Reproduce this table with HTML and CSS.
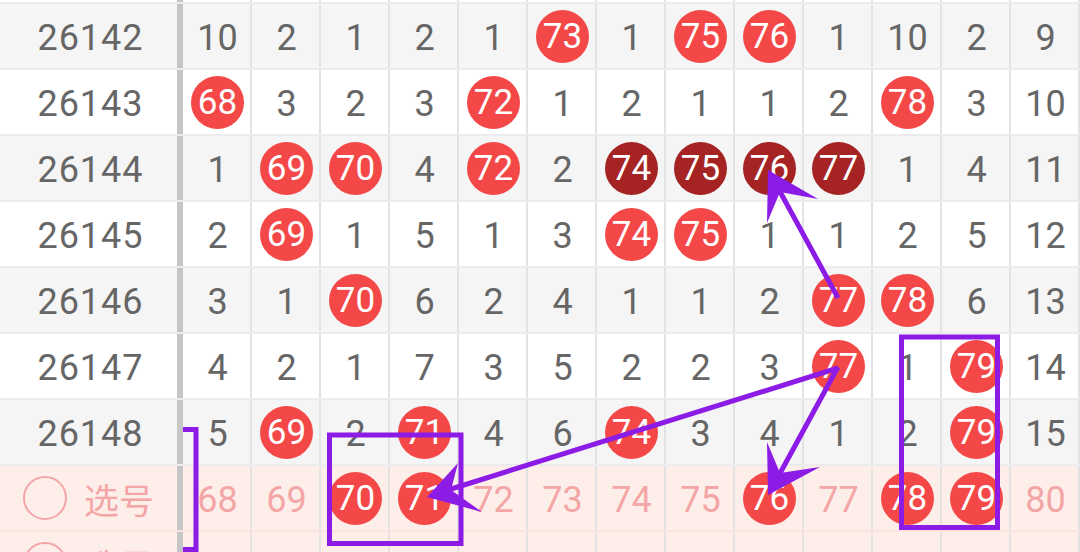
FILE: index.html
```html
<!DOCTYPE html>
<html lang="zh">

<head>
    <meta charset="UTF-8">
    <meta name="viewport" content="width=device-width, initial-scale=1.0">
    <title>走势图</title>
    <link rel="stylesheet" href="styles.css">
</head>

<body>
    <div class="chart">
        <div class="row odd">
            <div class="issue"></div>
            <div class="cell"></div><div class="cell"></div><div class="cell"></div><div class="cell"></div>
            <div class="cell"></div><div class="cell"></div><div class="cell"></div><div class="cell"></div>
            <div class="cell"></div><div class="cell"></div><div class="cell"></div><div class="cell"></div>
            <div class="cell"></div>
        </div>
        <div class="row even">
            <div class="issue">26142</div>
            <div class="cell">10</div><div class="cell">2</div><div class="cell">1</div><div class="cell">2</div>
            <div class="cell">1</div><div class="cell"><span class="ball">73</span></div><div class="cell">1</div>
            <div class="cell"><span class="ball">75</span></div><div class="cell"><span class="ball">76</span></div>
            <div class="cell">1</div><div class="cell">10</div><div class="cell">2</div><div class="cell">9</div>
        </div>
        <div class="row odd">
            <div class="issue">26143</div>
            <div class="cell"><span class="ball">68</span></div><div class="cell">3</div><div class="cell">2</div>
            <div class="cell">3</div><div class="cell"><span class="ball">72</span></div><div class="cell">1</div>
            <div class="cell">2</div><div class="cell">1</div><div class="cell">1</div><div class="cell">2</div>
            <div class="cell"><span class="ball">78</span></div><div class="cell">3</div><div class="cell">10</div>
        </div>
        <div class="row even">
            <div class="issue">26144</div>
            <div class="cell">1</div><div class="cell"><span class="ball">69</span></div>
            <div class="cell"><span class="ball">70</span></div><div class="cell">4</div>
            <div class="cell"><span class="ball">72</span></div><div class="cell">2</div>
            <div class="cell"><span class="ball dark">74</span></div><div class="cell"><span class="ball dark">75</span></div>
            <div class="cell"><span class="ball dark">76</span></div><div class="cell"><span class="ball dark">77</span></div>
            <div class="cell">1</div><div class="cell">4</div><div class="cell">11</div>
        </div>
        <div class="row odd">
            <div class="issue">26145</div>
            <div class="cell">2</div><div class="cell"><span class="ball">69</span></div><div class="cell">1</div>
            <div class="cell">5</div><div class="cell">1</div><div class="cell">3</div>
            <div class="cell"><span class="ball">74</span></div><div class="cell"><span class="ball">75</span></div>
            <div class="cell">1</div><div class="cell">1</div><div class="cell">2</div><div class="cell">5</div>
            <div class="cell">12</div>
        </div>
        <div class="row even">
            <div class="issue">26146</div>
            <div class="cell">3</div><div class="cell">1</div><div class="cell"><span class="ball">70</span></div>
            <div class="cell">6</div><div class="cell">2</div><div class="cell">4</div><div class="cell">1</div>
            <div class="cell">1</div><div class="cell">2</div><div class="cell"><span class="ball">77</span></div>
            <div class="cell"><span class="ball">78</span></div><div class="cell">6</div><div class="cell">13</div>
        </div>
        <div class="row odd">
            <div class="issue">26147</div>
            <div class="cell">4</div><div class="cell">2</div><div class="cell">1</div><div class="cell">7</div>
            <div class="cell">3</div><div class="cell">5</div><div class="cell">2</div><div class="cell">2</div>
            <div class="cell">3</div><div class="cell"><span class="ball">77</span></div><div class="cell">1</div>
            <div class="cell"><span class="ball">79</span></div><div class="cell">14</div>
        </div>
        <div class="row even">
            <div class="issue">26148</div>
            <div class="cell">5</div><div class="cell"><span class="ball">69</span></div><div class="cell">2</div>
            <div class="cell"><span class="ball">71</span></div><div class="cell">4</div><div class="cell">6</div>
            <div class="cell"><span class="ball">74</span></div><div class="cell">3</div><div class="cell">4</div>
            <div class="cell">1</div><div class="cell">2</div><div class="cell"><span class="ball">79</span></div>
            <div class="cell">15</div>
        </div>
        <div class="row pick">
            <div class="issue"><span class="radio"></span>选号</div>
            <div class="cell">68</div><div class="cell">69</div><div class="cell"><span class="ball">70</span></div>
            <div class="cell"><span class="ball">71</span></div><div class="cell">72</div><div class="cell">73</div>
            <div class="cell">74</div><div class="cell">75</div><div class="cell"><span class="ball">76</span></div>
            <div class="cell">77</div><div class="cell"><span class="ball">78</span></div>
            <div class="cell"><span class="ball">79</span></div><div class="cell">80</div>
        </div>
        <div class="row pick">
            <div class="issue"><span class="radio"></span>选号</div>
            <div class="cell">68</div><div class="cell">69</div><div class="cell">70</div><div class="cell">71</div>
            <div class="cell">72</div><div class="cell">73</div><div class="cell">74</div><div class="cell">75</div>
            <div class="cell">76</div><div class="cell">77</div><div class="cell">78</div><div class="cell">79</div>
            <div class="cell">80</div>
        </div>
    </div>

    <!-- hand drawn marks on top of the chart -->
    <svg class="marks" width="1080" height="552" viewBox="0 0 1080 552">
        <g fill="none" stroke="#8c1be6" stroke-width="5">
            <rect x="901.5" y="337" width="96" height="190.5" />
            <rect x="329.5" y="435" width="131.5" height="108.5" />
            <polyline points="183,429.5 196,429.5 196,549.5 183,549.5" />
            <line x1="838" y1="298" x2="778" y2="188" />
            <line x1="838" y1="368" x2="448" y2="490" />
            <line x1="838" y1="367" x2="778" y2="477" />
        </g>
        <g fill="#8c1be6">
            <polygon points="768,170 818,199 780,192 767,223" />
            <polygon points="427,497 458,463 451,490 482,512" />
            <polygon points="768,495 767,442 780,473 820,467" />
        </g>
    </svg>
</body>

</html>
```

FILE: styles.css
```css
* {
    box-sizing: border-box;
    padding: 0;
    margin: 0;
}

html,
body {
    width: 1080px;
    height: 552px;
    overflow: hidden;
    background: #fff;
}

body {
    position: relative;
    font-family: Roboto, "Noto Sans CJK SC", sans-serif;
    color: #666;
}

.chart {
    margin-top: -62px;
}

.row {
    display: grid;
    grid-template-columns: 183px repeat(13, 69px);
    height: 66px;
    border-bottom: 2px solid #ececec;
}

.row.even {
    background: #f5f5f5;
}

.row.odd {
    background: #fff;
}

.row.pick {
    background: #fdeee9;
    border-bottom-color: #fbe4de;
    color: #f4a6a6;
}

.issue {
    display: flex;
    justify-content: center;
    align-items: center;
    border-right: 6px solid #c6c6c6;
    font-size: 36px;
    letter-spacing: 1px;
    padding: 3px 0 0 4px;
}

.pick .issue {
    justify-content: flex-start;
    padding: 0 0 0 23px;
    font-family: "Noto Sans CJK SC", sans-serif;
    font-size: 35px;
    letter-spacing: 0;
}

.radio {
    width: 44px;
    height: 44px;
    border: 2.5px solid #f4a6a6;
    border-radius: 50%;
    margin-right: 17px;
}

.cell {
    display: flex;
    justify-content: center;
    align-items: center;
    border-right: 2px solid #e3e3e3;
    font-size: 36px;
    padding: 3px 0 0 2px;
}

.ball {
    display: flex;
    justify-content: center;
    align-items: center;
    width: 53px;
    height: 53px;
    border-radius: 50%;
    background: #f44848;
    color: #fff;
    font-size: 35px;
    margin-top: -3px;
}

.ball.dark {
    background: #a52323;
}

.marks {
    position: absolute;
    top: 0;
    left: 0;
}
```
